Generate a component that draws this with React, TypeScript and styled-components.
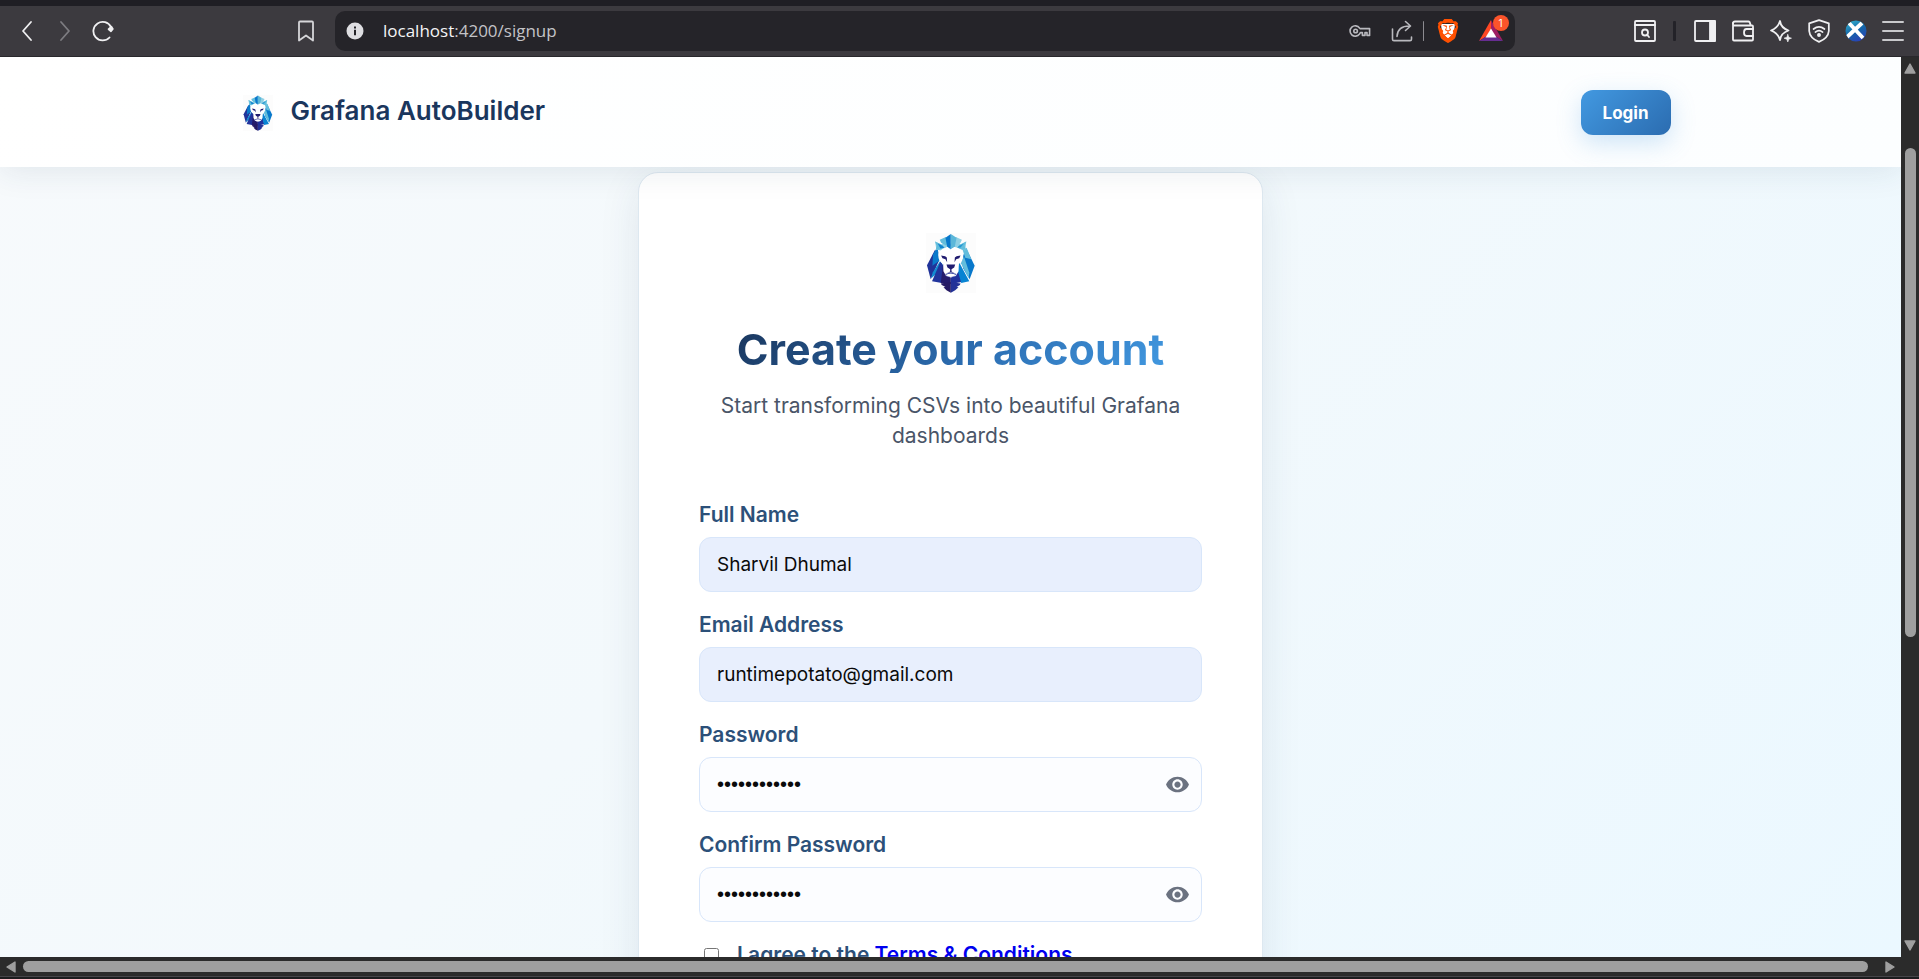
import React, { useState } from 'react';
import styled, { createGlobalStyle } from 'styled-components';
import { MdVisibility } from 'react-icons/md';
import { SiBrave } from 'react-icons/si';

const GlobalStyle = createGlobalStyle`
  *, *::before, *::after { box-sizing: border-box; }
  body {
    margin: 0;
    overflow: hidden;
    font-family: Inter, 'Open Sans', sans-serif;
    background: #2b2b2b;
  }
  button { font: inherit; border: 0; padding: 0; background: none; cursor: pointer; }
`;

/* ---------- browser window ---------- */

const Window = styled.div`
  display: flex;
  flex-direction: column;
  height: 100vh;
`;

const TabStrip = styled.div`
  flex: none;
  height: 6px;
  background: #1f1e24;
`;

const Toolbar = styled.div`
  flex: none;
  display: flex;
  align-items: center;
  height: 51px;
  padding: 0 8px;
  background: #3c3a3f;
  border-bottom: 1px solid #29282c;
`;

const NavGroup = styled.div`
  display: flex;
  align-items: center;
  width: 327px;
  padding-right: 10px;
`;

const Spacer = styled.div`
  flex: 1;
`;

const ToolButton = styled.button<{ $width?: number; $color?: string }>`
  display: flex;
  align-items: center;
  justify-content: center;
  width: ${(p) => p.$width ?? 37}px;
  height: 36px;
  color: ${(p) => p.$color ?? '#f0f0f2'};
  svg { display: block; flex: none; }
`;

const AddressBar = styled.div`
  flex: 1;
  display: flex;
  align-items: center;
  height: 40px;
  padding: 0 6px 0 10px;
  border-radius: 10px;
  background: #252429;
`;

const Url = styled.div`
  flex: 1;
  padding-left: 18px;
  font-family: 'Open Sans', sans-serif;
  font-size: 17px;
  line-height: 24px;
  color: #c3c3c7;
  span { color: #f4f4f6; }
`;

const ToolGroup = styled.div`
  display: flex;
  align-items: center;
  justify-content: flex-end;
  width: 396px;
`;

const Divider = styled.div<{ $color: string; $width: number; $gap: number }>`
  width: ${(p) => p.$width}px;
  height: 20px;
  margin: 0 ${(p) => p.$gap}px;
  border-radius: 1px;
  background: ${(p) => p.$color};
`;

const RewardsIcon = styled.span`
  position: relative;
  display: block;
`;

const Badge = styled.span`
  position: absolute;
  top: -5px;
  right: -6px;
  width: 16px;
  height: 16px;
  border-radius: 8px;
  background: #fb542b;
  color: #fff;
  font-size: 10px;
  line-height: 16px;
  text-align: center;
`;

const Middle = styled.div`
  flex: 1;
  display: flex;
  min-height: 0;
`;

const VerticalBar = styled.div`
  flex: none;
  display: flex;
  flex-direction: column;
  align-items: center;
  width: 18px;
  padding: 5px 0;
  background: #2b2b2b;
`;

const HorizontalBar = styled.div`
  flex: none;
  display: flex;
  align-items: center;
  height: 19px;
  padding: 0 23px 0 5px;
  background: #2b2b2b;
`;

const Track = styled.div<{ $vertical?: boolean }>`
  flex: 1;
  display: flex;
  flex-direction: ${(p) => (p.$vertical ? 'column' : 'row')};
  margin: ${(p) => (p.$vertical ? '0' : '0 16px 0 6px')};
`;

const Gap = styled.div<{ $grow: number }>`
  flex: ${(p) => p.$grow} 1 0;
`;

const Thumb = styled.div<{ $grow: number }>`
  flex: ${(p) => p.$grow} 1 0;
  min-width: 11px;
  min-height: 11px;
  border-radius: 6px;
  background: #9f9f9f;
`;

const BottomEdge = styled.div`
  flex: none;
  height: 3px;
  border-top: 1px solid #47464a;
  background: #1c1c1e;
`;

/* ---------- page ---------- */

const Page = styled.div`
  flex: 1;
  min-width: 0;
  overflow: hidden;
  background: linear-gradient(135deg, #f7fafc 0%, #f3f9fc 45%, #ebf8ff 100%);
`;

const Header = styled.header`
  position: relative;
  z-index: 1;
  padding: 33px 32px 32px;
  background: linear-gradient(135deg, #ffffff, #fcfeff);
  box-shadow: 0 4px 30px rgba(26, 54, 93, 0.1);
`;

const HeaderInner = styled.div`
  display: flex;
  align-items: center;
  justify-content: space-between;
  max-width: 1440px;
  margin: 0 auto;
`;

const Brand = styled.a`
  display: flex;
  align-items: center;
  gap: 18px;
  padding-left: 12px;
  color: #1a365d;
  font-size: 26px;
  font-weight: 600;
  line-height: 36px;
  text-decoration: none;
`;

const BrandName = styled.span`
  padding-bottom: 3px;
`;

const LoginButton = styled.button`
  && {
    height: 45px;
    padding: 0 22px;
    border-radius: 12px;
    background: linear-gradient(135deg, #4299e1, #2b6cb0);
    box-shadow: 0 8px 24px rgba(66, 153, 225, 0.25);
    color: #fff;
    font-size: 17px;
    font-weight: 700;
  }
`;

const Card = styled.main`
  width: 625px;
  max-width: 100%;
  margin: 5px auto 40px;
  padding: 60px;
  border: 1px solid #dde8f0;
  border-radius: 20px;
  background: #fff;
  box-shadow: 0 10px 40px rgba(26, 54, 93, 0.1);
`;

const CardHead = styled.div`
  display: flex;
  flex-direction: column;
  align-items: center;
  text-align: center;
`;

const Title = styled.h1`
  margin: 32px 0 18px;
  font-size: 43px;
  font-weight: 700;
  line-height: 48px;
  color: transparent;
  background: linear-gradient(135deg, #1a365d, #2b6cb0 55%, #4299e1);
  background-clip: text;
  -webkit-background-clip: text;
`;

const Subtitle = styled.p`
  margin: 0;
  font-size: 21px;
  line-height: 30px;
  color: #4a5568;
`;

const Form = styled.form`
  display: flex;
  flex-direction: column;
  gap: 21px;
  margin-top: 52px;
`;

const Field = styled.div`
  display: flex;
  flex-direction: column;
  gap: 10px;
`;

const Label = styled.label`
  font-size: 21px;
  font-weight: 600;
  line-height: 24px;
  color: #2c5079;
`;

const InputWrap = styled.div`
  position: relative;
`;

const TextInput = styled.input<{ $filled?: boolean }>`
  display: block;
  width: 100%;
  height: 55px;
  padding: 0 17px;
  border: 1px solid #d8e6fa;
  border-radius: 12px;
  outline: none;
  background: ${(p) => (p.$filled ? '#e8effd' : '#fcfdff')};
  color: #0a0a0a;
  font-family: inherit;
  font-size: 19px;
  &[type='password'] {
    font-family: 'Liberation Sans', sans-serif;
    font-size: 20px;
  }
`;

const EyeButton = styled.button`
  position: absolute;
  top: 0;
  right: 12px;
  display: flex;
  align-items: center;
  height: 100%;
  color: #6b7280;
`;

const Consent = styled.div`
  display: flex;
  align-items: center;
  gap: 18px;
  padding-left: 5px;
`;

const Checkbox = styled.input`
  width: 15px;
  height: 15px;
  margin: 0;
`;

const ConsentLabel = styled(Label)`
  a { color: #0000ee; text-decoration: none; }
`;

/* ---------- drawings ---------- */

const LionLogo = ({ width, height }: { width: number; height: number }) => (
  <svg width={width} height={height} viewBox="77 70 149 179" preserveAspectRatio="none" aria-hidden="true">
    <rect x="77" y="70" width="149" height="179" fill="#fcfcfc" />
    <path d="M104 120 80 166 91 208 117 150Z" fill="#203399" />
    <path d="M106 120 98 134 96 168 118 152 112 118Z" fill="#0a7acb" />
    <path d="M120 152 97 188 92 206 130 172Z" fill="#128bd2" />
    <path d="M197 116 222 168 207 208 188 176 182 150Z" fill="#0878cb" />
    <path d="M198 114 212 148 194 144 186 120Z" fill="#62bddc" />
    <path d="M190 140 206 188 204 204 181 160Z" fill="#62bddc" />
    <path d="M120 156 95 214 128 220 136 178Z" fill="#21349c" />
    <path d="M128 162 121 219 151 222 151 178Z" fill="#241b6b" />
    <path d="M172 168 183 216 151 222 151 192Z" fill="#20319b" />
    <path d="M176 158 206 214 182 219 170 176Z" fill="#0783d2" />
    <path d="M121 221 151 216 151 248 138 241 129 232 135 231 124 225Z" fill="#251963" />
    <path d="M180 221 151 216 151 248 164 241 174 232 168 231 178 225Z" fill="#233297" />
    <path d="M104 95 124 105 130 96 150 102 174 96 180 104 197 95 194 122 178 118 158 110 142 110 122 122 108 120Z" fill="#8fd0e4" />
    <path d="M104 95 126 106 132 114 116 120 106 120 109 108Z" fill="#62bddc" />
    <path d="M112 101 126 108 132 114 120 116Z" fill="#1184cf" />
    <path d="M197 95 176 106 170 114 186 120 195 120 192 108Z" fill="#62bddc" />
    <path d="M190 101 176 108 170 114 180 113Z" fill="#2496d1" />
    <path d="M118 90 136 82 144 102 138 108 122 99Z" fill="#62bddc" />
    <path d="M184 90 166 82 158 102 164 108 180 99Z" fill="#8fd0e4" />
    <path d="M151 73 135 84 140 110 151 121Z" fill="#0878cb" />
    <path d="M151 73 168 84 163 110 151 121Z" fill="#5bb7d9" />
    <path d="M151 119C143 109 122 114 114 132C112 146 118 158 128 162L129 184 137 198 151 203 166 198 174 184 175 162C186 157 190 144 187 130C180 113 160 109 151 119Z" fill="#fff" />
    <path d="M122 137 134 139 139 143 140 157 135 148 126 145Z" fill="#211d70" />
    <path d="M180 137 168 139 163 143 162 157 167 148 176 145Z" fill="#211d70" />
    <path d="M138 164H164L161 173 153 178V185L162 189 151 187 140 189 149 185V178L141 173Z" fill="#211d70" />
    <path d="M134 192 151 188 168 192 160 201H142Z" fill="#233399" />
    <path d="M135 195Q151 186 167 195Q151 207 135 195Z" fill="#fff" />
  </svg>
);

const Icon = ({ size = 22, stroke = 1.8, children }: { size?: number; stroke?: number; children: React.ReactNode }) => (
  <svg
    width={size}
    height={size}
    viewBox="0 0 22 22"
    fill="none"
    stroke="currentColor"
    strokeWidth={stroke}
    strokeLinecap="round"
    strokeLinejoin="round"
    aria-hidden="true"
  >
    {children}
  </svg>
);

const Arrow = ({ d }: { d: string }) => (
  <svg width="12" height="12" viewBox="0 0 12 12" aria-hidden="true">
    <path d={d} fill="#9f9f9f" stroke="#9f9f9f" strokeWidth="1.4" strokeLinejoin="round" />
  </svg>
);

/* ---------- parts ---------- */

function BrowserToolbar() {
  return (
    <Toolbar>
      <NavGroup>
        <ToolButton $width={38} aria-label="Back">
          <Icon><path d="M15 2 7 11 15 20" /></Icon>
        </ToolButton>
        <ToolButton $width={38} $color="#7d7c81" aria-label="Forward">
          <Icon><path d="M7 2 15 11 7 20" /></Icon>
        </ToolButton>
        <ToolButton $width={38} aria-label="Reload">
          <Icon stroke={1.8}>
            <path d="M17.5 17.5A9.3 9.3 0 1 1 19 7" />
            <path d="M16.6 9.2 19.4 6.8 20.8 9 19 11.2Z" fill="currentColor" />
          </Icon>
        </ToolButton>
        <Spacer />
        <ToolButton $width={38} $color="#d6d6d9" aria-label="Bookmark">
          <Icon><path d="M4 2.5Q4 1.5 5 1.5H17Q18 1.5 18 2.5V20.5L11 15.5 4 20.5Z" /></Icon>
        </ToolButton>
      </NavGroup>
      <AddressBar>
        <ToolButton $width={20} aria-label="Site information">
          <svg width="18" height="18" viewBox="0 0 18 18" aria-hidden="true">
            <circle cx="9" cy="9" r="8.5" fill="#dedee2" />
            <path d="M8 7.8H10V13.2H8ZM8 4.6H10V6.4H8Z" fill="#252429" />
          </svg>
        </ToolButton>
        <Url><span>localhost</span>:4200/signup</Url>
        <ToolButton $width={42} $color="#b9b9be" aria-label="Passwords">
          <Icon stroke={1.6}>
            <path d="M10.5 8A5.2 5.2 0 1 0 10.5 14L11.4 12.6H13.4V15.4H16V12.6H18V15.4H20.6V8.6H11Z" />
            <circle cx="6.6" cy="11" r="1.8" />
          </Icon>
        </ToolButton>
        <ToolButton $width={42} $color="#b9b9be" aria-label="Share">
          <Icon stroke={1.6}>
            <path d="M1.5 9V19.2Q1.5 20.6 3 20.6H19Q20.5 20.6 20.5 19.2V17" />
            <path d="M6 16.5Q6.5 6 18.5 6M14.5 1.5 19.5 6 14.5 10.5" />
          </Icon>
        </ToolButton>
        <Divider $color="#8c8b90" $width={1} $gap={0} />
        <ToolButton $width={48} aria-label="Shields">
          <svg width="24" height="24" viewBox="0 0 24 24" aria-hidden="true">
            <path d="M5 5H19L18 14 12 20 6 14Z" fill="#fff" />
            <SiBrave size={24} color="#ff5000" />
          </svg>
        </ToolButton>
        <ToolButton $width={37} aria-label="Rewards, 1 notification">
          <RewardsIcon>
            <svg width="24" height="22" viewBox="0 0 24 22" aria-hidden="true">
              <path d="M12 0 0 21 12 13.5Z" fill="#ff4724" />
              <path d="M12 0 24 21 12 13.5Z" fill="#9e1f63" />
              <path d="M0 21H24L12 13.5Z" fill="#662d91" />
              <path d="M12 8.5 6.5 17.5H17.5Z" fill="#fff" />
            </svg>
            <Badge>1</Badge>
          </RewardsIcon>
        </ToolButton>
      </AddressBar>
      <ToolGroup>
        <ToolButton aria-label="Find in page">
          <Icon>
            <rect x="1" y="1" width="20" height="20" rx="1" />
            <path d="M1 5H21" />
            <circle cx="11" cy="12.5" r="3" />
            <path d="M13.3 15 15 17" />
          </Icon>
        </ToolButton>
        <Divider $color="#232228" $width={3} $gap={10} />
        <ToolButton $width={38} aria-label="Sidebar">
          <Icon>
            <rect x="1" y="1" width="20" height="20" rx="1" />
            <path d="M16 1H21V21H16Z" fill="currentColor" />
          </Icon>
        </ToolButton>
        <ToolButton $width={38} aria-label="Wallet">
          <Icon>
            <path d="M21 9V6.5Q21 5.5 20 5.5H1.5M1 3V19.5Q1 20.5 2 20.5H20Q21 20.5 21 19.5V16" />
            <path d="M1 3.5Q1 1.5 3 1.5H16.5Q18 1.5 18.5 5" />
            <path d="M21 9H14.5Q12 9 12 12.5T14.5 16H21Z" />
          </Icon>
        </ToolButton>
        <ToolButton $width={38} aria-label="Assistant">
          <Icon>
            <path d="M10 1Q11 8 18.5 10.5Q11 13 10 20Q8 13 1 10.5Q8 8 10 1Z" />
            <path d="M17.8 14.5 18.8 17.2 21.5 18.2 18.8 19.2 17.8 22 16.8 19.2 14 18.2 16.8 17.2Z" fill="currentColor" strokeWidth="0.6" />
          </Icon>
        </ToolButton>
        <ToolButton aria-label="VPN">
          <Icon size={24} stroke={1.6}>
            <path d="M11 1 20 4V11Q19.5 17.5 11 21Q2.5 17.5 2 11V4Z" />
            <path d="M6 9.2Q11 5.4 16 9.2M7.7 12Q11 9.5 14.3 12" />
            <circle cx="11" cy="14.6" r="1" fill="currentColor" />
          </Icon>
        </ToolButton>
        <ToolButton aria-label="Profile">
          <svg width="22" height="22" viewBox="0 0 22 22" aria-hidden="true">
            <defs>
              <linearGradient id="profile" x1="0.2" y1="0" x2="0.7" y2="1">
                <stop offset="0" stopColor="#35b3cf" />
                <stop offset="0.5" stopColor="#1466a8" />
                <stop offset="1" stopColor="#2b3fb8" />
              </linearGradient>
              <clipPath id="disc"><circle cx="11" cy="11" r="10.5" /></clipPath>
            </defs>
            <g clipPath="url(#disc)">
              <rect width="22" height="22" fill="url(#profile)" />
              <path d="M4 3 18 18M17 3 1 18" stroke="#fff" strokeWidth="3.8" />
            </g>
          </svg>
        </ToolButton>
        <ToolButton $color="#c9c9cc" aria-label="Menu">
          <Icon stroke={2}><path d="M1 2H21M1 11H21M1 20H21" /></Icon>
        </ToolButton>
      </ToolGroup>
    </Toolbar>
  );
}

function PasswordField({ id, label }: { id: string; label: string }) {
  const [value, setValue] = useState('potato123456');
  const [shown, setShown] = useState(false);
  return (
    <Field>
      <Label htmlFor={id}>{label}</Label>
      <InputWrap>
        <TextInput id={id} type={shown ? 'text' : 'password'} value={value} onChange={(e) => setValue(e.target.value)} />
        <EyeButton type="button" aria-label={`Show ${label}`} onClick={() => setShown(!shown)}>
          <MdVisibility size={25} />
        </EyeButton>
      </InputWrap>
    </Field>
  );
}

export default function App() {
  return (
    <>
      <GlobalStyle />
      <Window>
        <TabStrip />
        <BrowserToolbar />
        <Middle>
          <Page>
            <Header>
              <HeaderInner>
                <Brand href="#">
                  <LionLogo width={30} height={36} />
                  <BrandName>Grafana AutoBuilder</BrandName>
                </Brand>
                <LoginButton type="button">Login</LoginButton>
              </HeaderInner>
            </Header>
            <Card>
              <CardHead>
                <LionLogo width={50} height={60} />
                <Title>Create your account</Title>
                <Subtitle>Start transforming CSVs into beautiful Grafana dashboards</Subtitle>
              </CardHead>
              <Form onSubmit={(e) => e.preventDefault()}>
                <Field>
                  <Label htmlFor="name">Full Name</Label>
                  <TextInput id="name" type="text" $filled defaultValue="Sharvil Dhumal" />
                </Field>
                <Field>
                  <Label htmlFor="email">Email Address</Label>
                  <TextInput id="email" type="email" $filled defaultValue="runtimepotato@gmail.com" />
                </Field>
                <PasswordField id="password" label="Password" />
                <PasswordField id="confirm" label="Confirm Password" />
                <Consent>
                  <Checkbox id="terms" type="checkbox" />
                  <ConsentLabel htmlFor="terms">
                    I agree to the <a href="#terms">Terms &amp; Conditions</a>
                  </ConsentLabel>
                </Consent>
              </Form>
            </Card>
          </Page>
          <VerticalBar>
            <Arrow d="M6 2 11 11H1Z" />
            <Track $vertical>
              <Gap $grow={74} />
              <Thumb $grow={490} />
              <Gap $grow={303} />
            </Track>
            <Arrow d="M6 10 11 1H1Z" />
          </VerticalBar>
        </Middle>
        <HorizontalBar>
          <Arrow d="M2 6 10 1V11Z" />
          <Track>
            <Thumb $grow={1} />
          </Track>
          <Arrow d="M10 6 2 1V11Z" />
        </HorizontalBar>
        <BottomEdge />
      </Window>
    </>
  );
}
